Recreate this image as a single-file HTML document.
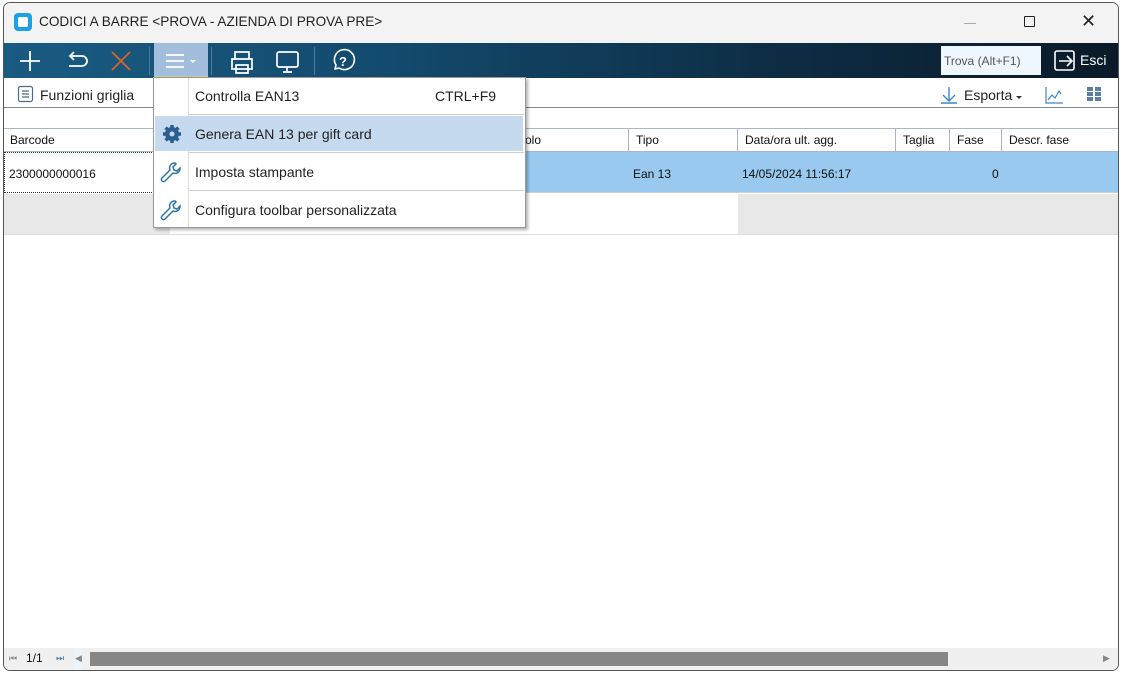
<!DOCTYPE html>
<html><head><meta charset="utf-8"><style>
*{box-sizing:border-box;margin:0;padding:0}
body{width:1122px;height:674px;background:#fff;font-family:"Liberation Sans","DejaVu Sans",sans-serif;position:relative;overflow:hidden}
.a{position:absolute}
.win{left:3px;top:2px;width:1116px;height:669px;border:1px solid #555;border-radius:7px;background:#fff;overflow:hidden}
.title{left:0;top:0;width:1116px;height:40px;background:#f3f3f3}
.tb{left:0;top:40px;width:1116px;height:35px;background:linear-gradient(90deg,#1a5b82 0%,#134a6d 35%,#0d2c43 70%,#0a1a28 100%)}
.sep{width:1px;height:28px;top:4px;background:#4d7d9c}
.t{font-size:14px;color:#222;white-space:nowrap}
.s{font-size:12px;color:#111;white-space:nowrap}
.hd{top:125px;height:24px;border-right:1px solid #a9b6c4;border-top:1px solid #a9b6c4;border-bottom:1px solid #a9b6c4}
</style></head><body>
<div class="a win">
 <div class="a title"></div>
 <div class="a" style="left:10px;top:10px;width:18px;height:18px;border-radius:4px;background:#1ea0e6"><div class="a" style="left:4px;top:4px;width:10px;height:10px;background:#fff;border-radius:2px"></div></div>
 <div class="a t" style="left:35px;top:11px;font-size:13.6px">CODICI A BARRE &lt;PROVA - AZIENDA DI PROVA PRE&gt;</div>
 <div class="a" style="left:960px;top:20px;width:12px;height:1px;background:#aaa"></div>
 <div class="a" style="left:1020px;top:13px;width:11px;height:11px;border:1.3px solid #222;border-radius:1px"></div>
 <div class="a t" style="left:1077px;top:8px;font-size:18px;color:#222">✕</div>

 <div class="a tb"></div>
 <svg class="a" style="left:0;top:40px" width="360" height="35" fill="none" stroke-width="1.8">
  <path d="M26 8v20M16 18h20" stroke="#fff"/>
  <path d="M66 13h12a5 5 0 0 1 0 10h-13M70 9l-4 4 4 4" stroke="#fff"/>
  <path d="M108 9l18 18M126 9l-18 18" stroke="#e0602a"/>
  <rect x="150" y="0" width="54" height="35" fill="#a3bedc" stroke="none"/>
  <rect x="150" y="33" width="54" height="2" fill="#d9c98a" stroke="none"/>
  <path d="M162 12h18M162 18h18M162 24h18" stroke="#fff"/>
  <path d="M186 17l3 3 3-3z" fill="#fff" stroke="none"/>
  <path d="M231 16v-7h14v7M228 16h20v10h-20zM232 22h12v8h-12zM235 26h6" stroke="#fff" stroke-width="1.7"/>
  <rect x="273" y="9" width="21" height="15" rx="2" stroke="#fff" stroke-width="1.7"/>
  <path d="M283 24v4M279 29h9" stroke="#fff" stroke-width="1.7"/>
  <path d="M331 26l1-4a10 10 0 1 1 3 3z" stroke="#fff" stroke-width="1.6" stroke-linejoin="round"/>
  <text x="335" y="23" fill="#fff" font-size="13" font-weight="bold" font-family="Liberation Sans">?</text>
 </svg>
 <div class="a sep" style="left:145px;top:44px"></div>
 <div class="a sep" style="left:207px;top:44px"></div>
 <div class="a sep" style="left:310px;top:44px"></div>
 <div class="a" style="left:937px;top:43px;width:100px;height:29px;background:#eef7fd"></div>
 <div class="a s" style="left:940px;top:51px;color:#555">Trova (Alt+F1)</div>
 <svg class="a" style="left:1050px;top:47px" width="24" height="22" fill="none" stroke="#fff" stroke-width="1.6"><rect x="1" y="1" width="19" height="19" rx="2"/><path d="M5 11h13M13 6l5 5-5 5"/></svg>
 <div class="a t" style="left:1076px;top:49px;color:#fff">Esci</div>

 <div class="a" style="left:0;top:104px;width:1116px;height:1px;background:#888"></div>
 <svg class="a" style="left:13px;top:82px" width="18" height="18" fill="none" stroke="#4a6b8a" stroke-width="1.2"><rect x="1.5" y="1.5" width="14" height="15" rx="2"/><path d="M5 6h7M5 9h7M5 12h7"/></svg>
 <div class="a t" style="left:36px;top:84px">Funzioni griglia</div>
 <svg class="a" style="left:936px;top:83px" width="18" height="18" fill="none" stroke="#3a88c8" stroke-width="1.4"><path d="M9 1v14M3 9l6 6 6-6M1 17h16"/></svg>
 <div class="a t" style="left:960px;top:84px">Esporta</div>
 <div class="a" style="left:1012px;top:93px;border:3px solid transparent;border-top:3px solid #333"></div>
 <svg class="a" style="left:1040px;top:83px" width="20" height="18" fill="none" stroke="#3a88c8" stroke-width="1.2"><path d="M2 1v16h17M4 14l4-5 3 3 4-7 2 3"/></svg>
 <svg class="a" style="left:1083px;top:84px" width="16" height="16" fill="#5a7fa0"><rect x="0" y="0" width="6" height="4"/><rect x="8" y="0" width="6" height="4"/><rect x="0" y="5" width="6" height="4"/><rect x="8" y="5" width="6" height="4"/><rect x="0" y="10" width="6" height="4"/><rect x="8" y="10" width="6" height="4"/></svg>

 <div class="a hd" style="left:0;width:161px"></div><div class="a s" style="left:6px;top:130px">Barcode</div>
 <div class="a hd" style="left:160px;width:465px"></div><div class="a s" style="left:497px;top:130px">Articolo</div>
 <div class="a hd" style="left:624px;width:110px"></div><div class="a s" style="left:632px;top:130px">Tipo</div>
 <div class="a hd" style="left:733px;width:159px"></div><div class="a s" style="left:741px;top:130px">Data/ora ult. agg.</div>
 <div class="a hd" style="left:891px;width:55px"></div><div class="a s" style="left:899px;top:130px">Taglia</div>
 <div class="a hd" style="left:945px;width:53px"></div><div class="a s" style="left:953px;top:130px">Fase</div>
 <div class="a hd" style="left:997px;width:119px"></div><div class="a s" style="left:1005px;top:130px">Descr. fase</div>

 <div class="a" style="left:0;top:149px;width:1116px;height:41px;background:#99c9ee;border-bottom:1px solid #cfcfcf"></div>
 <div class="a" style="left:0;top:149px;width:154px;height:41px;background:#fff;border:1px dotted #333"></div>
 <div class="a s" style="left:5px;top:164px">2300000000016</div>
 <div class="a s" style="left:629px;top:164px">Ean 13</div>
 <div class="a s" style="left:738px;top:164px">14/05/2024 11:56:17</div>
 <div class="a s" style="left:988px;top:164px">0</div>
 <div class="a" style="left:0;top:191px;width:166px;height:40px;background:#e8e8e8"></div>
 <div class="a" style="left:734px;top:191px;width:382px;height:40px;background:#e8e8e8"></div>
 <div class="a" style="left:0;top:231px;width:1116px;height:1px;background:#ddd"></div>

 <div class="a" style="left:0;top:645px;width:1116px;height:22px;background:#f0f0f0"></div>
 <div class="a" style="left:70px;top:645px;width:8px;height:22px;background:#eaf4fc"></div>
 <div class="a" style="left:5px;top:650px;font-size:9px;color:#888">⏮</div>
 <div class="a s" style="left:22px;top:648px">1/1</div>
 <div class="a" style="left:52px;top:650px;font-size:9px;color:#5a7fa0">⏭</div>
 <div class="a" style="left:71px;top:650px;font-size:9px;color:#888">◀</div>
 <div class="a" style="left:86px;top:649px;width:858px;height:14px;background:#868686"></div>
 <div class="a" style="left:1099px;top:650px;font-size:9px;color:#888">▶</div>
</div>

<div class="a" style="left:153px;top:77px;width:373px;height:151px;background:#fff;border:1px solid #999;box-shadow:2px 2px 3px rgba(0,0,0,.3)">
 <div class="a" style="left:34px;top:0;width:1px;height:149px;background:#ddd"></div>
 <div class="a" style="left:35px;top:36px;width:335px;height:1px;background:#ccc"></div>
 <div class="a" style="left:1px;top:38px;width:368px;height:35px;background:#c5d9ef"></div>
 <div class="a" style="left:35px;top:74px;width:335px;height:1px;background:#ccc"></div>
 <div class="a" style="left:35px;top:112px;width:335px;height:1px;background:#ccc"></div>
 <div class="a t" style="left:41px;top:10px">Controlla EAN13</div>
 <div class="a t" style="left:281px;top:10px">CTRL+F9</div>
 <div class="a t" style="left:41px;top:48px">Genera EAN 13 per gift card</div>
 <div class="a t" style="left:41px;top:86px">Imposta stampante</div>
 <div class="a t" style="left:41px;top:124px">Configura toolbar personalizzata</div>
 <svg class="a" style="left:8px;top:46px" width="20" height="20"><g fill="#2a5f8f"><circle cx="10" cy="10" r="7"/><g stroke="#2a5f8f" stroke-width="3.5"><path d="M10 1v18M1 10h18M3.6 3.6l12.8 12.8M16.4 3.6L3.6 16.4"/></g></g><circle cx="10" cy="10" r="2.5" fill="#c5d9ef"/></svg>
 <svg class="a" style="left:6px;top:83px" width="24" height="24" fill="none" stroke="#2f74a8" stroke-width="1.5"><path d="M15 2a5 5 0 0 0-5 7L2 17a2 2 0 0 0 3 3l8-8a5 5 0 0 0 7-5l-3 3-3-1-1-3 3-3z"/></svg>
 <svg class="a" style="left:6px;top:121px" width="24" height="24" fill="none" stroke="#2f74a8" stroke-width="1.5"><path d="M15 2a5 5 0 0 0-5 7L2 17a2 2 0 0 0 3 3l8-8a5 5 0 0 0 7-5l-3 3-3-1-1-3 3-3z"/></svg>
</div>
</body></html>
